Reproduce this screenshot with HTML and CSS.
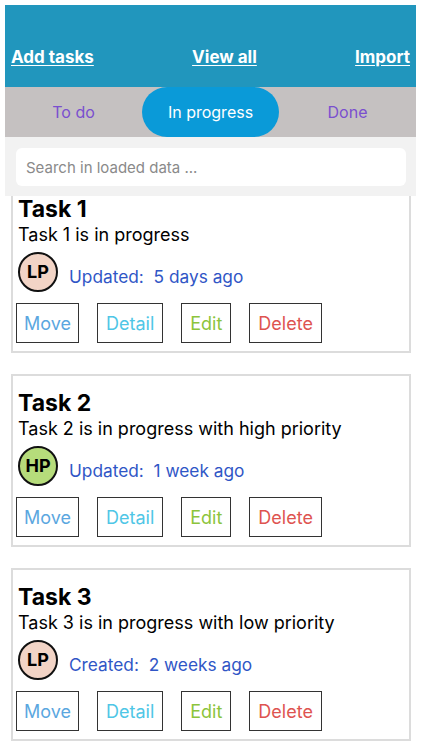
FILE: index.html
```html
<!DOCTYPE html>
<html>
<head>
<meta charset="utf-8">
<link rel="stylesheet" href="styles.css">
</head>
<body>
<div class="app">
  <div class="topbar">
    <a class="toplink" href="#">Add tasks</a>
    <a class="toplink" href="#">View all</a>
    <a class="toplink" href="#">Import</a>
  </div>
  <div class="tabs">
    <div class="tab">To do</div>
    <div class="tab active">In progress</div>
    <div class="tab">Done</div>
  </div>
  <div class="searchbar">
    <div class="search">Search in loaded data ...</div>
  </div>
  <div class="viewport">
    <div class="list">
      <div class="card">
        <div class="title">Task 1</div>
        <div class="desc">Task 1 is in progress</div>
        <div class="meta">
          <div class="avatar low">LP</div>
          <div class="stamp">Updated:&nbsp; 5 days ago</div>
        </div>
        <div class="actions">
          <div class="btn move">Move</div>
          <div class="btn detail">Detail</div>
          <div class="btn edit">Edit</div>
          <div class="btn delete">Delete</div>
        </div>
      </div>
      <div class="card">
        <div class="title">Task 2</div>
        <div class="desc">Task 2 is in progress with high priority</div>
        <div class="meta">
          <div class="avatar high">HP</div>
          <div class="stamp">Updated:&nbsp; 1 week ago</div>
        </div>
        <div class="actions">
          <div class="btn move">Move</div>
          <div class="btn detail">Detail</div>
          <div class="btn edit">Edit</div>
          <div class="btn delete">Delete</div>
        </div>
      </div>
      <div class="card">
        <div class="title">Task 3</div>
        <div class="desc">Task 3 is in progress with low priority</div>
        <div class="meta">
          <div class="avatar low">LP</div>
          <div class="stamp">Created:&nbsp; 2 weeks ago</div>
        </div>
        <div class="actions">
          <div class="btn move">Move</div>
          <div class="btn detail">Detail</div>
          <div class="btn edit">Edit</div>
          <div class="btn delete">Delete</div>
        </div>
      </div>
    </div>
  </div>
</div>
</body>
</html>
```

FILE: styles.css
```css
* { box-sizing: border-box; }
html, body { margin: 0; padding: 0; background: #fff; }
body {
  font-family: Inter, "Noto Sans", "Liberation Sans", sans-serif;
  color: #000;
}
.app {
  width: 411px;
  height: 745px;
  margin: 5px 0 0 5px;
  display: flex;
  flex-direction: column;
  overflow: hidden;
}
.topbar {
  height: 82px;
  background: #2196bd;
  display: flex;
  justify-content: space-between;
  align-items: flex-end;
  padding: 0 6px 19px 6px;
  flex: none;
}
.toplink {
  color: #fff;
  font-weight: 700;
  font-size: 17px;
  line-height: 22px;
  text-decoration: underline;
  text-underline-offset: 2px;
}
.tabs {
  height: 50px;
  background: #c5c1c1;
  display: grid;
  grid-template-columns: 1fr 1fr 1fr;
  flex: none;
}
.tab {
  display: flex;
  align-items: center;
  justify-content: center;
  color: #7a4fcf;
  font-size: 16px;
  border-radius: 25px;
}
.tab.active {
  background: #0a9ad8;
  color: #fff;
}
.searchbar {
  height: 59px;
  background: #f2f2f2;
  padding: 11px 10px 0 11px;
  flex: none;
  position: relative;
  z-index: 1;
}
.search {
  height: 38px;
  background: #fff;
  border-radius: 6px;
  padding-left: 10px;
  display: flex;
  align-items: center;
  color: #8a8a8a;
  font-size: 15px;
}
.viewport {
  flex: 1;
  overflow: hidden;
  padding: 0 5px 0 6px;
}
.list {
  margin-top: -16px;
  display: flex;
  flex-direction: column;
  gap: 21px;
}
.card {
  border: 2px solid #dcdcdc;
  padding: 13px 3px 8px 3px;
  display: flex;
  flex-direction: column;
}
.title {
  font-size: 23px;
  line-height: 28px;
  font-weight: 700;
  padding-left: 2px;
}
.desc {
  font-size: 18px;
  line-height: 24px;
  padding-left: 2px;
}
.meta {
  margin-top: 5px;
  display: flex;
  align-items: center;
  gap: 11px;
  padding-left: 2px;
}
.avatar {
  width: 40px;
  height: 40px;
  flex: none;
  border-radius: 50%;
  border: 2px solid #111;
  display: flex;
  align-items: center;
  justify-content: center;
  font-weight: 700;
  font-size: 18px;
  padding-bottom: 2px;
}
.avatar.low { background: #f2d4c6; }
.avatar.high { background: #b6dc7b; }
.stamp {
  color: #3056c6;
  font-size: 17.3px;
  line-height: 24px;
  margin-top: 10px;
}
.actions {
  margin-top: 11px;
  display: flex;
  gap: 18px;
}
.btn {
  height: 40px;
  border: 1.5px solid #333;
  display: flex;
  align-items: center;
  justify-content: center;
  font-size: 18px;
  padding: 0 8px;
}
.btn.move { color: #5ba7df; padding: 0 7px; }
.btn.detail { color: #4fc6e6; }
.btn.edit { color: #8cc43c; }
.btn.delete { color: #de5450; }
```
